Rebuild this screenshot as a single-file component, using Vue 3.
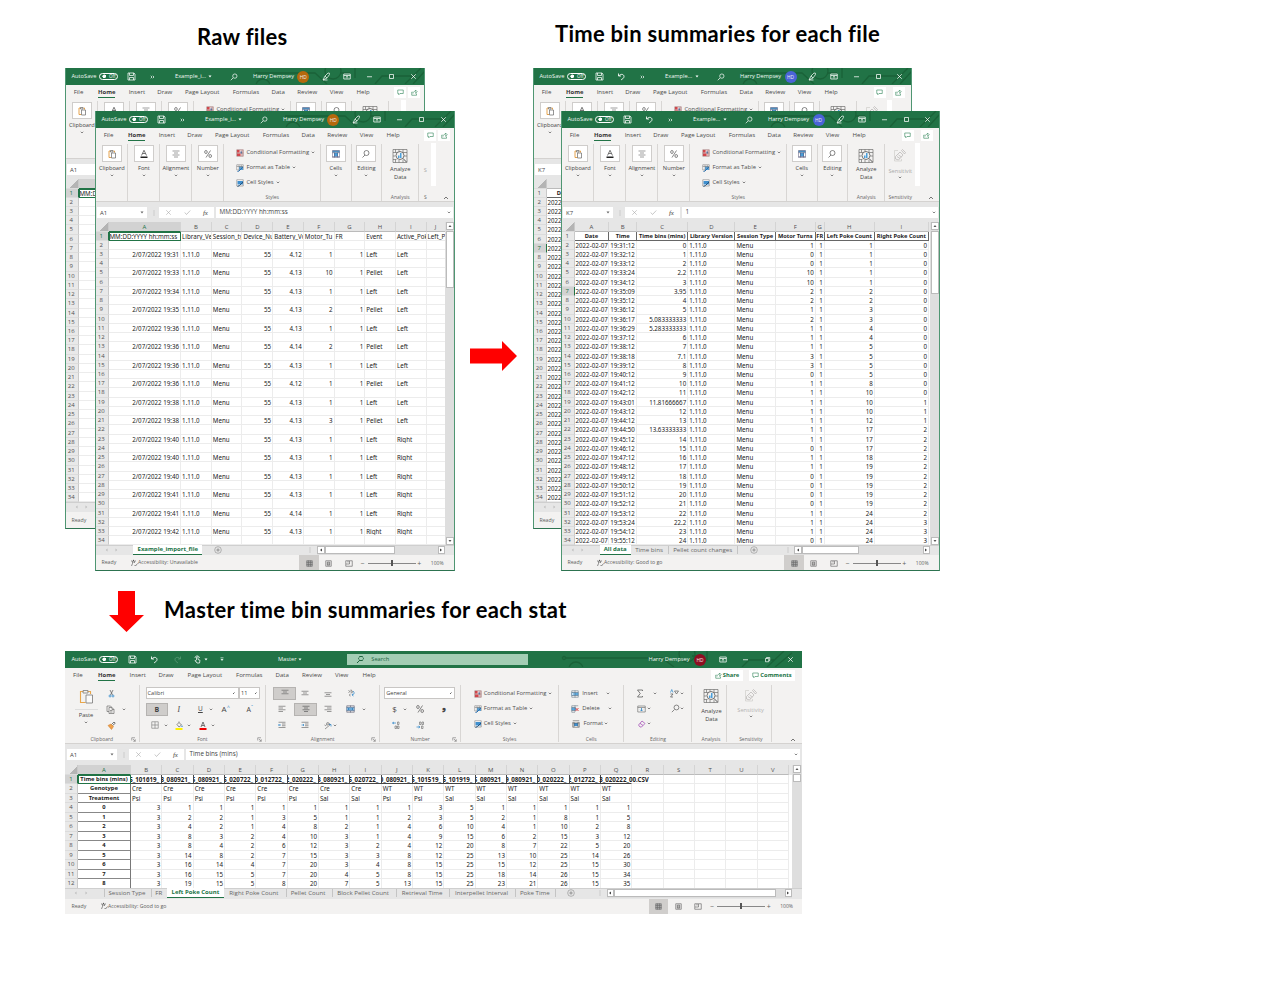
<script setup>
import { h } from 'vue'

// name: [width px, height px, viewBox, markup]
const S = (d, c = '#555', w = 1.4) => `<path d="${d}" fill="none" stroke="${c}" stroke-width="${w}"/>`
const icons = {
  chev: [4, 3, '0 0 8 6', S('M1.5 1.5L4 4L6.5 1.5', '#555', 1.4)],
  chevw: [4, 3, '0 0 8 6', '<path d="M1 1h6L4 5z" fill="#fff"/>'],
  tri: [4, 3, '0 0 8 6', '<path d="M1 1h6L4 5z" fill="#666"/>'],
  custom: [4, 5, '0 0 8 10', '<path d="M1 1h6v1.500h-6zM1 4h6L4 8z" fill="#dfeee5"/>'],
  up: [6, 4, '0 0 12 8', S('M2 6L6 2L10 6', '#555', 1.6)],
  save: [9, 9, '0 0 18 18', S('M2 2H14L16 4V16H2ZM5 2V7H13V2M5 16V11H13V16', '#fff', 1.5)],
  undo: [9, 9, '0 0 18 18', S('M3 3V8H8M3.500 8C7 3 14 4 14 9C14 13 10 14 8 16', '#fff', 1.7)],
  redo: [9, 9, '0 0 18 18', S('M15 3V8H10M14.500 8C11 3 4 4 4 9C4 13 8 14 10 16', '#5c9c78', 1.5)],
  touch: [9, 9, '0 0 18 18', S('M7 10V4.500Q8.500 2.500 10 4.500V9L14 10.500L13 16H8L4 11L7 12M4 6C4 1 12 0 13 6', '#fff', 1.5)],
  more: [5, 4, '0 0 10 8', S('M1.500 1.500L4 4L1.500 6.500M5.500 1.500L8 4L5.500 6.500', '#fff', 1.4)],
  find: [8, 8, '0 0 16 16', S('M6 10L1.500 14.500M14 6.200A4.300 4.300 0 1 1 5.400 6.200A4.300 4.300 0 1 1 14 6.200', '#fff', 1.4)],
  findd: [9, 9, '0 0 16 16', S('M6 10L1.500 14.500M14 6.200A4.300 4.300 0 1 1 5.400 6.200A4.300 4.300 0 1 1 14 6.200', '#555', 1.2)],
  pen: [9, 9, '0 0 18 18', S('M2 16L6 8L12 2Q16 1 15 5L10 12ZM6 8L10 12M2 16H11', '#fff', 1.4)],
  ribbon: [8, 7, '0 0 16 14', S('M1.500 2H14.500V12H1.500ZM1.500 5H14.500M8 11V7M6 8.500L8 6.500L10 8.500', '#fff', 1.5)],
  min: [7, 7, '0 0 14 14', S('M2 7.500H12', '#fff', 1.5)],
  max: [7, 7, '0 0 14 14', S('M3 3H11V11H3Z', '#fff', 1.5)],
  restore: [7, 7, '0 0 14 14', S('M3 5H9.500V11.500H3ZM5 5V3H11.500V9H9.500', '#fff', 1.4)],
  close: [7, 7, '0 0 14 14', S('M2.500 2.500L11.500 11.500M11.500 2.500L2.500 11.500', '#fff', 1.5)],
  comment: [7, 7, '0 0 14 14', S('M1.500 2H12.500V9H6L3.500 11.500V9H1.500Z', '#2f8557', 1.2)],
  share: [7, 7, '0 0 14 14', S('M3 6H1.500V12.500H11V9M4 9C4 6 6 4.500 9 4.500V2L12.500 5.500L9 8.500V6.500', '#2f8557', 1.2)],
  clip: [10, 10, '0 0 20 20', S('M7 4H4V17H8M13 4H15V7', '#e29a3c', 1.8) + S('M7 3H12V6H7ZM9 8H17V18H9Z', '#666', 1.4)],
  fontA: [10, 10, '0 0 20 20', S('M5 13L10 2.500L15 13M7 9H13', '#555', 1.6) + '<path d="M3 15h14v3H3z" fill="#222"/>'],
  align: [10, 10, '0 0 20 20', S('M3 4H17M6 8H14M3 12H17M6 16H14', '#777', 1.4)],
  percent: [10, 10, '0 0 20 20', S('M15 3L6 17M8.500 6A2.600 3 0 1 1 3.300 6A2.600 3 0 1 1 8.500 6M17 14A2.600 3 0 1 1 11.800 14A2.600 3 0 1 1 17 14', '#555', 1.4)],
  cells: [10, 10, '0 0 20 20', '<path d="M3 3h14v4H3z" fill="#4c8fc0"/><path d="M6 8h8v7H6z" fill="#4b9fdb"/>' + S('M3 3H17V17H3ZM3 7.500H17M3 15H17M7 7V17M13 7V17', '#557', 1)],
  lens: [10, 10, '0 0 20 20', S('M8 12L3 17M16 8A5 5 0 1 1 6 8A5 5 0 1 1 16 8', '#555', 1.4)],
  cond: [8, 8, '0 0 16 16', '<path d="M1 1h14v14H1z" fill="#f3d3d3"/><path d="M2 2h5v5H2zM2 9h7v5H2z" fill="#d8444a"/><path d="M9 5h3v4H9z" fill="#3a7fc4"/>' + S('M1.500 1.500H14.500V14.500H1.500ZM1.500 8H14.500M12 2V14', '#866', 1)],
  ftable: [8, 8, '0 0 16 16', '<path d="M1 1h14v11H1z" fill="#fff"/><path d="M6 5h8v7H6z" fill="#58a5de"/>' + S('M1.500 1.500H14.500V12M1.500 1.500V12H6M1.500 5H14M6 2V12M10.500 2V9', '#666', 1) + S('M14 6L6 14L3 15', '#2b6fae', 2)],
  cstyle: [8, 8, '0 0 16 16', '<path d="M1 1h14v11H1z" fill="#fff"/><path d="M3 4h11v7H3z" fill="#3f8fce"/>' + S('M1.500 1.500H14.500V14H1.500Z', '#666', 1) + S('M14 6L7 13L3 15', '#24527c', 2)],
  analyze: [16, 16, '0 0 32 32', S('M2 3H30V29H2ZM2 9H30M2 23H9M24 16H30M7 3V9M14 3V9M22 3V9M7 23V29M14 24V29M22 24V29M2 16H7', '#666', 1.3) + '<circle cx="16" cy="15" r="8" fill="#f3f2f1" stroke="#555" stroke-width="1.600"/><path d="M12 15h3v5h-3zM16 10h3v10h-3z" fill="#4b9fdb"/>' + S('M22 21L29 28', '#555', 2)],
  sens: [14, 15, '0 0 28 30', S('M5 17L14 8L20 14L11 24L5 22ZM17 5L19 3L25 9L23 12ZM8 17L14 21M11 14L17 18', '#b9b7b5', 1.5) + S('M10 5H3V26H17V22', '#c9c7c5', 1.2)],
  paste: [15, 15, '0 0 30 30', S('M9 5H3V27H13M17 5H23V10', '#e9a64b', 2.2) + S('M8 3H18V8H8Z', '#888', 1.8) + '<path d="M14 12h13v16H14z" fill="#fafafa" stroke="#777" stroke-width="1.600"/>'],
  cut: [9, 9, '0 0 18 18', S('M6 2L11 12M12 2L7 12', '#555', 1.4) + '<circle cx="6" cy="14" r="2" fill="none" stroke="#2e86c8" stroke-width="1.500"/><circle cx="12" cy="14" r="2" fill="none" stroke="#2e86c8" stroke-width="1.500"/>'],
  copy: [9, 9, '0 0 18 18', S('M6 13H2V2H9L11 4M6 5H12L16 9V17H6ZM12 5V9H16M8 11H13M8 14H13', '#666', 1.3)],
  brush: [9, 9, '0 0 18 18', S('M9 7L14 2L16.500 4.500L11 9', '#555', 1.6) + '<path d="M2 9l6-3 5 5-4 6z" fill="#f0a04a" stroke="#c97a2a"/>'],
  borders: [8, 8, '0 0 16 16', S('M1.500 1.500H14.500V14.500H1.500ZM8 1.500V14.500M1.500 8H14.500', '#777', 1.2)],
  fill: [8, 9, '0 0 16 18', S('M4 7L8 3L13 8L8 12ZM8 3V1', '#555', 1.3) + '<path d="M14 8l1.500 4h-3z" fill="#2e86c8"/><path d="M1 14h14v4H1z" fill="#fff200"/>'],
  fcolor: [8, 9, '0 0 16 18', S('M4 12L8 2L12 12M5.500 9H10.500', '#555', 1.6) + '<path d="M1 14h14v4H1z" fill="#f00000"/>'],
  vtop: [8, 8, '0 0 16 16', S('M1 2.500H15M4 6H12M1 9.500H15', '#666', 1.3)],
  vmid: [8, 8, '0 0 16 16', S('M1 4.500H15M4 8H12M1 11.500H15', '#666', 1.3)],
  vbot: [8, 8, '0 0 16 16', S('M1 7.500H15M4 11H12M1 14.500H15', '#666', 1.3)],
  left: [8, 8, '0 0 16 16', S('M1 2.500H15M1 6H10M1 9.500H15M1 13H10', '#666', 1.3)],
  mid: [8, 8, '0 0 16 16', S('M1 2.500H15M4 6H12M1 9.500H15M4 13H12', '#555', 1.3)],
  right: [8, 8, '0 0 16 16', S('M1 2.500H15M6 6H15M1 9.500H15M6 13H15', '#666', 1.3)],
  wrap: [8, 8, '0 0 16 16', S('M3 7A2 2 0 1 0 3 3M8 1V7A2 2 0 1 0 8 4M7 10A2 2 0 1 0 7 14', '#666', 1.3) + S('M12 4Q15 6 14 9T10 12M12 9L10 12L13 14', '#2e86c8', 1.4)],
  merge: [9, 8, '0 0 18 16', '<path d="M1 4h16v8H1z" fill="#8ec5ec"/>' + S('M1.500 1.500H16.500V14.500H1.500ZM1.500 4.500H16.500M1.500 11.500H16.500M9 1V4M9 12V15', '#556', 1.1) + S('M4 8H14M6 6L4 8L6 10M12 6L14 8L12 10', '#1d6fb0', 1.2)],
  outdent: [8, 8, '0 0 16 16', S('M1 2.500H15M8 6H15M8 9.500H15M1 13H15', '#666', 1.3) + S('M6 8H1M3 6L1 8L3 10', '#2e86c8', 1.4)],
  indent: [8, 8, '0 0 16 16', S('M1 2.500H15M8 6H15M8 9.500H15M1 13H15', '#666', 1.3) + S('M1 8H6M4 6L6 8L4 10', '#2e86c8', 1.4)],
  orient: [9, 9, '0 0 18 18', S('M3 8A2.500 2.500 0 1 0 7 5L9 9M8 2L12 8A2 2 0 1 0 10 4M4 16L15 7', '#666', 1.3) + S('M12 7H16V11', '#2e86c8', 1.5)],
  decinc: [8, 8, '0 0 16 16', S('M11 2H14V7H11ZM6 10H9V15H6ZM11 10H14V15H11Z', '#666', 1.2) + S('M8 4H1M4 2L1 4L4 6', '#2e86c8', 1.4)],
  decdec: [8, 8, '0 0 16 16', S('M7 2H10V7H7ZM12 2H15V7H12ZM11 10H14V15H11Z', '#666', 1.2) + S('M1 12H8M5 10L8 12L5 14', '#2e86c8', 1.4)],
  ins: [8, 8, '0 0 16 16', '<path d="M1 5h14v6H1z" fill="#5ba9df"/>' + S('M1.500 1.500H14.500V14.500H1.500ZM8 1V15M1.500 5H14.500M1.500 11H14.500', '#567', 1) + S('M7 8H2M4 6L2 8L4 10', '#fff', 1.2)],
  del: [8, 8, '0 0 16 16', '<path d="M1 5h9v6H1z" fill="#5ba9df"/>' + S('M1.500 1.500H14.500M1.500 1.500V14.500H8M1.500 5H9M1.500 11H8M8 1V14', '#567', 1) + S('M9 6L15 12M15 6L9 12', '#d83b3b', 1.8)],
  fmt: [8, 8, '0 0 16 16', '<path d="M4 6h8v6H4z" fill="#3f8fce"/>' + S('M1.500 1.500H14.500M1.500 4.500V14.500H14.500V4.500M1.500 6H14.500M4 4V14M12 4V14', '#555', 1.2)],
  sigma: [8, 9, '0 0 16 18', S('M13 4V2H3L8.500 9L3 16H13V14', '#555', 1.5)],
  filld: [9, 8, '0 0 18 16', S('M1.500 2H16.500V14H1.500ZM1.500 5H16.500', '#666', 1.2) + S('M9 6V12M6.500 9.500L9 12L11.500 9.500', '#2e86c8', 1.6)],
  erase: [9, 8, '0 0 18 16', S('M3 10L10 2L16 7L9 14H6ZM6 6.500L12 11', '#a24bb5', 1.5)],
  sort: [9, 9, '0 0 18 18', S('M1 7L3.500 1L6 7', '#2e86c8', 1.4) + S('M1 10H6L1 16H6', '#555', 1.4) + S('M9 4H17L13 10Z', '#555', 1.3)],
  launch: [5, 5, '0 0 10 10', S('M1.500 7V1.500H8M4 4L8.500 8.500M8.500 4.500V8.500H4.500', '#666', 1.1)],
  x: [7, 7, '0 0 14 14', S('M2.500 2.500L11.500 11.500M11.500 2.500L2.500 11.500', '#aaa', 1.2)],
  check: [7, 7, '0 0 14 14', S('M1.500 7L5 11L12.500 3', '#aaa', 1.3)],
  dots: [2, 6, '0 0 4 12', '<path d="M1 1h2v2H1zM1 5h2v2H1zM1 9h2v2H1z" fill="#b5b5b5"/>'],
  prev: [3, 4, '0 0 6 8', '<path d="M5 1v6L1.500 4z" fill="#bbb"/>'],
  next: [3, 4, '0 0 6 8', '<path d="M1 1v6L4.500 4z" fill="#bbb"/>'],
  aup: [4, 4, '0 0 8 8', '<path d="M1 6h6L4 2z" fill="#555"/>'],
  adown: [4, 4, '0 0 8 8', '<path d="M1 2h6L4 6z" fill="#555"/>'],
  aleft: [4, 4, '0 0 8 8', '<path d="M6 1v6L2 4z" fill="#444"/>'],
  aright: [4, 4, '0 0 8 8', '<path d="M2 1v6L6 4z" fill="#444"/>'],
  plus: [8, 8, '0 0 14 14', '<circle cx="7" cy="7" r="5.800" fill="none" stroke="#8a8a8a"/>' + S('M7 4V10M4 7H10', '#777', 1.2)],
  access: [8, 8, '0 0 16 16', '<circle cx="7" cy="3" r="1.500" fill="#555"/>' + S('M2 3.500L7 6L12 3.500M5 6V9L3 14M9 6V8M9 12L11 14L15 9', '#555', 1.3)],
  grid: [7, 7, '0 0 14 14', '<path d="M1 1h12v12H1z" fill="#aaa"/>' + S('M1.500 1.500H12.500V12.500H1.500ZM1 5H13M1 9H13M5 1V13M9 1V13', '#666', 1.1)],
  page: [7, 7, '0 0 14 14', S('M1.500 1.500H12.500V12.500H1.500ZM4.500 4H9.500V10.500H4.500ZM4 6H10M4 8.500H10', '#666', 1.3)],
  brk: [8, 7, '0 0 16 14', S('M1.500 1.500H14.500V12.500H1.500ZM2 8H9V2M6 2V5', '#666', 1.3)],
}
const Icon = (p) => {
  const [w, ht, vb, inner] = icons[p.name]
  return h('svg', { class: 'ic', width: w, height: ht, viewBox: vb, innerHTML: inner })
}
Icon.props = ['name']

// A row of labels and icons; each item is [start, kind, value, class] and
// stretches as far as the start of the next one.
const Strip = (p) =>
  h('div', { class: 'strip', style: { paddingLeft: p.items[0][0] + 'px' } },
    p.items.map(([x, kind, v, cls], i) => {
      const next = p.items[i + 1]
      const style = next ? { width: (next[0] - x).toFixed(2) + 'px' } : {}
      let inner = null
      if (kind === 'i') inner = h(Icon, { name: v })
      if (kind === 't') inner = h('span', { class: cls }, v)
      if (kind === 'on') inner = h('b', { class: 'onbox' }, [h(Icon, { name: v })])
      return h('div', { class: 'slot', style }, [inner])
    }))
Strip.props = ['items']

const menu = ['File', 'Home', 'Insert', 'Draw', 'Page Layout', 'Formulas', 'Data', 'Review', 'View', 'Help']
const tabItems = (xs) => menu.map((m, i) => [xs[i], 't', m, i === 1 ? 'tab home' : 'tab'])
const tabsSmall = tabItems([8.7, 33, 63.7, 92.3, 120, 167.7, 206.6, 232.3, 264.9, 291.7])
const tabsMaster = tabItems([8, 33, 64.5, 93.5, 122.5, 171, 210.5, 237, 270, 297.5])

const titleRaw = [[6.5, 't', 'AutoSave', 'tt auto'], [34, 't', 'Off', 'toggle'], [62, 'i', 'save'], [85.3, 'i', 'more'],
  [110, 't', 'Example_i...', 'tt ex'], [143, 'i', 'chevw'], [165, 'i', 'find'], [188, 't', 'Harry Dempsey', 'tt name'],
  [232.3, 't', 'HD', 'who amber'], [257, 'i', 'pen'], [278, 'i', 'ribbon'], [301, 'i', 'min'], [322.7, 'i', 'max'], [344.6, 'i', 'close']]
const titleBin = [[6.5, 't', 'AutoSave', 'tt auto'], [34, 't', 'Off', 'toggle'], [62, 'i', 'save'], [83.500, 'i', 'undo'], [107, 'i', 'more'],
  [132, 't', 'Example...', 'tt ex'], [162, 'i', 'chevw'], [184, 'i', 'find'], [207, 't', 'Harry Dempsey', 'tt name'],
  [251.5, 't', 'HD', 'who blue'], [274.7, 'i', 'pen'], [297, 'i', 'ribbon'], [320.500, 'i', 'min'], [342, 'i', 'max'], [363.500, 'i', 'close']]
const titleMaster = [[6.5, 't', 'AutoSave', 'tt auto'], [34, 't', 'Off', 'toggle'], [62.5, 'i', 'save'], [84.7, 'i', 'undo'], [108, 'i', 'redo'],
  [128.5, 'i', 'touch'], [139.5, 'i', 'chevw'], [155, 'i', 'custom'], [213, 't', 'Master', 'tt mst'], [233.500, 'i', 'chevw'],
  [282.3, 't', 'Search', 'search'], [583.5, 't', 'Harry Dempsey', 'tt name'], [629, 't', 'HD', 'who red'], [653.7, 'i', 'ribbon'],
  [677, 'i', 'min'], [699.2, 'i', 'restore'], [721.7, 'i', 'close']]

const rawTimes = '31 33 34 35 36 36 36 36 38 38 40 40 40 41 41 42'.split(' ')
const rawBatt = '12 13 13 13 13 14 13 12 13 13 13 13 13 13 14 13'.split(' ')
const rawTurn = [1, 10, 1, 2, 1, 2, 1, 1, 1, 3, 1, 1, 1, 1, 1, 1]
const rawEvent = 'Left Pellet Left Pellet Left Pellet Left Pellet Left Pellet Left Left Left Left Left Right'.split(' ')
const rawHour = (m) => '2/07/2022 19:' + m
const rawRows = [['MM:DD:YYYY hh:mm:ss', 'Library_Ve', 'Session_ty', 'Device_Nu', 'Battery_Vo', 'Motor_Tu', 'FR', 'Event', 'Active_Pok', 'Left_P']]
for (let i = 0; i < 33; i++) {
  const k = (i - 1) / 2
  rawRows.push(i % 2 ? [rawHour(rawTimes[k]), '1.11.0', 'Menu', '55', '4.' + rawBatt[k], rawTurn[k], '1', rawEvent[k], k < 10 ? 'Left' : 'Right', ''] : Array(10).fill(''))
}
const binSrc = `31:12 0 1 1 0|32:12 1 0 1 0|33:12 2 0 1 0|33:24 2.2 10 1 0|34:12 3 10 1 0|35:09 3.95 2 2 0|35:12 4 2 2 0|36:12 5 1 3 0|36:17 5.083333333 2 3 0|36:29 5.283333333 1 4 0|37:12 6 1 4 0|38:12 7 1 5 0|38:18 7.1 3 5 0|39:12 8 3 5 0|40:12 9 0 5 0|41:12 10 1 8 0|42:12 11 1 10 0|43:01 11.81666667 1 10 1|43:12 12 1 10 1|44:12 13 1 12 1|44:50 13.63333333 1 17 2|45:12 14 1 17 2|46:12 15 0 17 2|47:12 16 1 18 2|48:12 17 1 19 2|49:12 18 0 19 2|50:12 19 0 19 2|51:12 20 0 19 2|52:12 21 0 19 2|53:12 22 1 24 2|53:24 22.2 1 24 3|54:12 23 1 24 3|55:12 24 0 24 3`
const binRows = [['Date', 'Time', 'Time bins (mins)', 'Library Version', 'Session Type', 'Motor Turns', 'FR', 'Left Poke Count', 'Right Poke Count'],
  ...binSrc.split('|').map((l) => {
    const [t, b, m, lp, rp] = l.split(' ')
    return ['2022-02-07', '19:' + t, b, '1.11.0', 'Menu', m, '1', lp, rp]
  })]

const raw = {
  kind: 'raw', title: titleRaw, ref: 'A1', value: 'MM:DD:YYYY hh:mm:ss', rows: rawRows,
  cols: [72.6, 30.7, 30.7, 30.7, 30.7, 30.7, 30.7, 30.7, 30.7, 19], align: 'rllrrrrlll', hot: 1,
  sheets: [[9.500, 'i', 'prev'], [20.300, 'i', 'next'], [38.3, 't', 'Example_import_file', 'sheet on w69'], [119, 'i', 'plus'], [214.500, 'i', 'dots']],
  access: 'Accessibility: Unavailable',
}
const bin = {
  kind: 'bin', title: titleBin, ref: 'K7', value: '1', rows: binRows,
  cols: [34.7, 28, 51, 47.3, 40.3, 40, 9, 50, 54.3], align: 'llrllrrrr', hot: 7,
  sheets: [[9.500, 'i', 'prev'], [20.300, 'i', 'next'], [38.7, 't', 'All data', 'sheet on w31'], [74.2, 't', 'Time bins', 'sheet'], [107.500, 't', '', 'bar'],
    [112.2, 't', 'Pellet count changes', 'sheet'], [176.500, 't', '', 'bar'], [188.7, 'i', 'plus'], [226.500, 'i', 'dots']],
  access: 'Accessibility: Good to go',
}
// A window lying behind another one only carries what shows past its front edge.
const behind = (w) => ({ ...w, back: true, value: '', access: '', sheets: w.sheets.slice(0, 2), rows: w.rows.map((r) => r.slice(0, 1)) })
const wins = [{ ...behind(raw), id: 'rawBack' }, { ...raw, id: 'rawFront' }, { ...behind(bin), id: 'binBack' }, { ...bin, id: 'binFront' }]

const groups = [['Clipboard', 'clip'], ['Font', 'fontA'], ['Alignment', 'align'], ['Number', 'percent']]
const groups2 = [['Cells', 'cells'], ['Editing', 'lens']]
const styles = [['cond', 'Conditional Formatting'], ['ftable', 'Format as Table'], ['cstyle', 'Cell Styles']]

const letters = 'ABCDEFGHIJKLMNOPQRSTUV'.split('')
const mRows = [
  ['Time bins (mins)', ...'5_101619_ 3_080921_ 5_080921_ 5_020722_ 0_012722_ 2_020222_ 3_080921_ 5_020722_ 0_080921_ 5_101519_ 5_101919_ 5_080921_ 9_080921_ 0_020222_ 2_012722_ 3_020222_00.CSV'.split(' ')],
  ['Genotype', ...Array(8).fill('Cre'), ...Array(8).fill('WT')],
  ['Treatment', ...'Psi Psi Psi Psi Psi Psi Sal Sal Psi Psi Sal Sal Sal Sal Sal Sal'.split(' ')],
  ...`3 1 1 1 1 1 1 1 1 3 5 1 1 1 1 1|3 2 2 1 3 5 1 1 2 3 5 2 1 8 1 5|3 4 2 1 4 8 2 1 4 6 10 4 1 10 2 8|3 8 3 2 4 10 3 1 4 9 15 6 2 15 3 12|3 8 4 2 6 12 3 2 4 12 20 8 7 22 5 20|3 14 8 2 7 15 3 3 8 12 25 13 10 25 14 26|3 16 14 4 7 20 3 4 8 15 25 15 12 25 15 30|3 16 15 5 7 20 4 5 8 15 25 18 14 26 15 34|3 19 15 5 8 20 7 5 13 15 25 23 21 26 15 35`
    .split('|').map((l, i) => [String(i), ...l.split(' ')]),
].map((r) => [...r, '', '', '', '', ''])

const sheetsMaster = [[9, 'i', 'prev'], [20, 'i', 'next'], [39, 't', '', 'bar'], [43.5, 't', 'Session Type', 'sheet'], [86.3, 't', '', 'bar'], [90.3, 't', 'FR', 'sheet'],
  [101.7, 't', 'Left Poke Count', 'sheet on w57'], [164.3, 't', 'Right Poke Count', 'sheet'], [221, 't', '', 'bar'], [225.7, 't', 'Pellet Count', 'sheet'],
  [266.7, 't', '', 'bar'], [272.3, 't', 'Block Pellet Count', 'sheet'], [331, 't', '', 'bar'], [336.9, 't', 'Retrieval Time', 'sheet'], [384, 't', '', 'bar'],
  [390.2, 't', 'Interpellet Interval', 'sheet'], [450, 't', '', 'bar'], [455, 't', 'Poke Time', 'sheet'], [490, 't', '', 'bar'], [502.3, 'i', 'plus'], [534, 'i', 'dots']]

const fontRows = [
  [[6, 't', 'Calibri', 'box w93'], [99.500, 't', '11', 'box w21']],
  [[6, 't', 'B', 'onbox bold'], [38, 't', 'I', 'ital'], [58.500, 't', 'U', 'und'], [69.500, 'i', 'chev'], [82, 't', 'A', 'big'], [87.500, 't', '^', 'sup'], [107, 't', 'A', 'big sm'], [111.500, 't', 'ˇ', 'sup']],
  [[11.500, 'i', 'borders'], [24, 'i', 'chev'], [35, 'i', 'fill'], [47.500, 'i', 'chev'], [59.500, 'i', 'fcolor'], [71.800, 'i', 'chev']],
]
const alignRows = [
  [[7.3, 'on', 'vtop'], [35.3, 'i', 'vmid'], [58, 'i', 'vbot'], [81.3, 'i', 'wrap']],
  [[12.300, 'i', 'left'], [28, 'on', 'mid'], [58, 'i', 'right'], [80, 'i', 'merge'], [96, 'i', 'chev']],
  [[12.300, 'i', 'outdent'], [35.3, 'i', 'indent'], [57.3, 'i', 'orient'], [67, 'i', 'chev']],
]
const numRows = [
  [[4, 't', 'General', 'box w71']],
  [[12, 't', '$', 'big'], [22.700, 'i', 'chev'], [35, 'i', 'percent'], [61.500, 't', '❟', 'comma']],
  [[12, 'i', 'decinc'], [36, 'i', 'decdec']],
]
const cellRows = [
  [[12, 'i', 'ins'], [23.3, 't', 'Insert', 'ui'], [47.500, 'i', 'chev']],
  [[12, 'i', 'del'], [23.3, 't', 'Delete', 'ui'], [49.500, 'i', 'chev']],
  [[13, 'i', 'fmt'], [24.500, 't', 'Format', 'ui'], [44.700, 'i', 'chev']],
]
const editRows = [
  [[11.500, 'i', 'sigma'], [28.500, 'i', 'chev'], [46, 'i', 'sort'], [56, 'i', 'chev']],
  [[12.700, 'i', 'filld'], [23, 'i', 'chev'], [46.500, 'i', 'findd'], [56, 'i', 'chev']],
  [[12.700, 'i', 'erase'], [23, 'i', 'chev']],
]
</script>

<template>
  <main class="canvas">
    <h2 class="head h1">Raw files</h2>
    <h2 class="head h2">Time bin summaries for each file</h2>
    <h2 class="head h3">Master time bin summaries for each stat</h2>
    <svg class="arrow right" width="48" height="32" viewBox="0 0 48 32"><path d="M0 8.500H32V1L47 16L32 31V23.500H0Z" fill="#f00" /></svg>
    <svg class="arrow down" width="36" height="42" viewBox="0 0 36 42"><path d="M9 0H26V24H35L17.500 41L0 24H9Z" fill="#f00" /></svg>

    <section v-for="w in wins" :key="w.id" class="win" :class="[w.id, w.kind]">
      <header class="titlebar">
        <svg class="deco" width="170" height="16" viewBox="0 0 170 16">
          <g fill="none" stroke="#1a6238" stroke-width="1.300">
            <path d="M0 5H60L72 16M85 5H95M100 0V10M120 16L127 8H160M150 16L166 0M158 16L170 3" /><circle cx="78" cy="3" r="8" /><circle cx="8" cy="18" r="7" />
          </g>
        </svg>
        <Strip :items="w.title" />
      </header>
      <nav class="tabs"><Strip :items="tabsSmall" /><div class="acts"><i><Icon name="comment" /></i><i><Icon name="share" /></i></div></nav>
      <div class="ribbon">
        <div v-for="(g, gi) in groups" :key="g[0]" class="grp"><span class="tile"><Icon :name="g[1]" /></span><template v-if="!w.back || !gi"><span class="lbl">{{ g[0] }}</span><Icon name="chev" /></template></div>
        <div class="grp styles">
          <p v-for="s in w.back ? styles.slice(0, 1) : styles" :key="s[0]"><Icon :name="s[0]" /><span class="ui">{{ s[1] }}</span><Icon name="chev" /></p>
          <span v-if="!w.back" class="foot">Styles</span>
        </div>
        <div v-for="g in groups2" :key="g[0]" class="grp narrow"><span class="tile"><Icon :name="g[1]" /></span><template v-if="!w.back"><span class="lbl">{{ g[0] }}</span><Icon name="chev" /></template></div>
        <div class="grp ana"><Icon name="analyze" /><template v-if="!w.back"><span class="lbl">Analyze<br />Data</span><span class="foot">Analysis</span></template></div>
        <div class="grp sen">
          <Icon v-if="w.kind === 'bin'" name="sens" />
          <template v-if="!w.back"><span class="lbl">{{ w.kind === 'bin' ? 'Sensitivit' : 'S' }}</span><Icon v-if="w.kind === 'bin'" name="chev" /><span class="foot">{{ w.kind === 'bin' ? 'Sensitivity' : 'S' }}</span></template>
        </div>
        <div class="scrollstrip"></div>
        <Icon name="up" class="collapse" />
      </div>
      <div class="fbar">
        <div class="ref"><span>{{ w.ref }}</span><Icon name="tri" /></div><Icon name="dots" />
        <div class="fx"><Icon name="x" /><Icon name="check" /><em v-if="!w.back">fx</em></div>
        <div class="val"><span>{{ w.value }}</span><Icon name="chev" /></div>
      </div>
      <div class="sheetarea">
        <div class="cells">
          <div class="hrow"><span class="rh corner"></span><span v-for="(c, i) in w.cols" :key="i" class="ch" :class="{ hot: w.kind === 'raw' && i === 0 }" :style="{ width: c + 'px' }">{{ w.back ? '' : letters[i] }}</span></div>
          <div v-for="(r, ri) in w.rows" :key="ri" class="row" :class="{ first: ri === 0 }">
            <span class="rh" :class="{ hot: ri + 1 === w.hot }">{{ ri + 1 }}</span>
            <span v-for="(c, i) in r" :key="i" class="c" :class="[ri ? w.align[i] : 'l', { sel: w.kind === 'raw' && !ri && !i }]" :style="{ width: w.cols[i] + 'px' }">{{ w.back && w.kind === 'raw' && ri ? '' : c }}</span>
          </div>
        </div>
        <div class="vbar"><b class="ar"><Icon name="aup" /></b><b class="thumb"></b><b class="ar end"><Icon name="adown" /></b></div>
      </div>
      <div class="sheets"><Strip :items="w.sheets" /><div class="hbar"><b class="ar"><Icon name="aleft" /></b><b class="thumb"></b><b class="ar end"><Icon name="aright" /></b></div></div>
      <footer class="status">
        <span class="ready">Ready</span><template v-if="!w.back"><Icon name="access" /><span>{{ w.access }}</span>
          <div class="zoom"><i class="von"><Icon name="grid" /></i><Icon name="page" /><Icon name="brk" /><span class="pm mi">−</span><i class="track"><b></b></i><span class="pm">+</span><span class="pct">100%</span></div></template>
      </footer>
    </section>

    <section class="win master">
      <header class="titlebar">
        <svg class="deco" width="250" height="16" viewBox="0 0 250 16">
          <g fill="none" stroke="#1a6238" stroke-width="1.300">
            <path d="M14 7H110L122 16M140 5H150M155 0V10M190 16L197 9H222M215 16L232 0M223 16L240 2" /><circle cx="135" cy="3" r="8" /><circle cx="24" cy="18" r="7" /><circle cx="12" cy="7" r="1.500" />
          </g>
        </svg>
        <Strip :items="titleMaster" />
      </header>
      <nav class="tabs"><Strip :items="tabsMaster" /><div class="acts"><i><Icon name="share" />Share</i><i><Icon name="comment" />Comments</i></div></nav>
      <div class="ribbon">
        <div class="g g1">
          <div class="clipcols">
            <div class="pastecol"><Icon name="paste" /><span>Paste</span><Icon name="chev" /></div>
            <div class="cutcol"><Strip :items="[[5.5, 'i', 'cut']]" /><Strip :items="[[5, 'i', 'copy'], [20.500, 'i', 'chev']]" /><Strip :items="[[6, 'i', 'brush']]" /></div>
          </div>
          <span class="foot">Clipboard</span><Icon name="launch" class="la" />
        </div>
        <div class="g g2"><Strip v-for="(r, i) in fontRows" :key="i" :items="r" /><span class="foot">Font</span><Icon name="launch" class="la" /></div>
        <div class="g g3"><Strip v-for="(r, i) in alignRows" :key="i" :items="r" /><span class="foot">Alignment</span><Icon name="launch" class="la" /></div>
        <div class="g g4"><Strip v-for="(r, i) in numRows" :key="i" :items="r" /><span class="foot">Number</span><Icon name="launch" class="la" /></div>
        <div class="g g5 tight"><div v-for="s in styles" :key="s[0]" class="srow"><Icon :name="s[0]" /><span class="ui">{{ s[1] }}</span><Icon name="chev" /></div><span class="foot">Styles</span></div>
        <div class="g g6 tight"><Strip v-for="(r, i) in cellRows" :key="i" :items="r" /><span class="foot">Cells</span></div>
        <div class="g g7 tight"><Strip v-for="(r, i) in editRows" :key="i" :items="r" /><span class="foot">Editing</span></div>
        <div class="g g8 an"><Icon name="analyze" /><span class="lbl">Analyze<br />Data</span><span class="foot">Analysis</span></div>
        <div class="g g9 an dim"><Icon name="sens" /><span class="lbl">Sensitivity</span><Icon name="chev" /><span class="foot">Sensitivity</span></div>
        <Icon name="up" class="collapse" />
      </div>
      <div class="fbar">
        <div class="ref"><span>A1</span><Icon name="tri" /></div><Icon name="dots" />
        <div class="fx"><Icon name="x" /><Icon name="check" /><em>fx</em></div>
        <div class="val"><span>Time bins (mins)</span><Icon name="chev" /></div>
      </div>
      <div class="sheetarea">
        <div class="cells">
          <div class="hrow"><span class="rh corner"></span><span v-for="(l, i) in letters" :key="l" class="ch" :class="{ hot: i === 0, ca: i === 0 }">{{ l }}</span></div>
          <div v-for="(r, ri) in mRows" :key="ri" class="row" :class="{ first: ri === 0 }">
            <span class="rh" :class="{ hot: ri === 0 }">{{ ri + 1 }}</span>
            <span v-for="(c, i) in r" :key="i" class="c" :class="[i === 0 ? 'ca' : ri > 2 ? 'r' : 'l', { sel: !ri && !i, file: !ri && i > 0 && i < 17, last: !ri && i === 16 }]">{{ c }}</span>
          </div>
        </div>
        <div class="vbar"><b class="ar"><Icon name="aup" /></b><b class="thumb"></b></div>
      </div>
      <div class="sheets"><Strip :items="sheetsMaster" /><div class="hbar"><b class="ar"><Icon name="aleft" /></b><b class="thumb"></b><b class="ar end"><Icon name="aright" /></b></div></div>
      <footer class="status">
        <span class="ready">Ready</span><Icon name="access" /><span>Accessibility: Good to go</span>
        <div class="zoom"><i class="von"><Icon name="grid" /></i><Icon name="page" /><Icon name="brk" /><span class="pm mi">−</span><i class="track"><b></b></i><span class="pm">+</span><span class="pct">100%</span></div>
      </footer>
    </section>
  </main>
</template>

<style>
body { margin: 0; background: #fff; }
</style>

<style scoped>
.canvas { position: relative; width: 1280px; height: 983px; overflow: hidden; background: #fff; font-family: "Open Sans", "Noto Sans", sans-serif; font-size: 6px; line-height: 1; color: #444; }
.canvas :deep(*) { box-sizing: border-box; white-space: nowrap; }
.canvas :deep(i), .canvas :deep(b) { font-style: normal; }
.canvas :deep(.ic) { display: block; flex: none; }
.head { position: absolute; margin: 0; font: 700 22px/28px Lato, sans-serif; color: #000; letter-spacing: 0.280px; }
.h1 { left: 197px; top: 22.500px; }
.h2 { left: 555px; top: 19.500px; }
.h3 { left: 164px; top: 595.500px; }
.arrow { position: absolute; }
.arrow.right { left: 470px; top: 340px; }
.arrow.down { left: 109px; top: 591px; }

.win { position: absolute; display: flex; flex-direction: column; overflow: hidden; background: #f3f2f1; height: 460px; }
.win::after { content: ""; position: absolute; inset: 0; border: 1px solid #4f9672; border-top: 0; border-bottom-color: #2d7350; pointer-events: none; }
.win.raw { width: 360px; }
.win.bin { width: 379px; }
.rawBack { left: 65px; top: 68px; }
.rawFront { left: 95px; top: 111px; }
.binBack { left: 533px; top: 68px; }
.binFront { left: 561px; top: 111px; }
.win.rawBack, .win.binBack { height: 461px; }
.win.master { left: 65px; top: 651px; width: 737px; height: 263px; }
.win.master::after { display: none; }

.canvas :deep(.strip) { display: flex; align-items: center; height: 100%; }
.canvas :deep(.slot) { flex: none; display: flex; align-items: center; height: 100%; }
.canvas :deep(.slot > *) { flex: none; }

.titlebar { position: relative; flex: none; height: 17px; background: #217346; color: #fff; }
.deco { position: absolute; right: 0; top: 0; }
.titlebar :deep(.strip) { position: relative; }
.titlebar :deep(.tt) { font-size: 5.700px; color: #f2f8f4; }
.titlebar :deep(.toggle) { width: 18.500px; height: 6.500px; border: 1px solid #fff; border-radius: 4px; font-size: 4.500px; line-height: 4.500px; padding-left: 9px; background: radial-gradient(circle at 4.200px 2.300px, #fff 1.600px, transparent 2px); }
.titlebar :deep(.who) { width: 12px; height: 12px; border-radius: 50%; font-size: 4.800px; line-height: 12px; text-align: center; color: #eee; }
.titlebar :deep(.amber) { background: #b5690c; }
.titlebar :deep(.blue) { background: #4a63d8; }
.titlebar :deep(.red) { background: #8e0f22; }
.titlebar :deep(.search) { width: 181px; height: 11px; background: #a3cdb4; color: #20633f; line-height: 11px; padding-left: 24px; font-size: 5.700px; background-image: radial-gradient(circle at 14px 4.500px, transparent 1.700px, #20633f 2px, #20633f 2.400px, transparent 2.800px), linear-gradient(135deg, transparent 48%, #20633f 48%, #20633f 52%, transparent 52%); background-size: 100% 100%, 3px 3px; background-repeat: no-repeat; background-position: 0 0, 9.500px 6px; }

.tabs { position: relative; flex: none; height: 15px; display: flex; justify-content: space-between; }
.tabs :deep(.tab) { font-size: 6.100px; color: #4a4a4a; line-height: 10px; border-bottom: 1.300px solid transparent; margin-top: -0.500px; }
.tabs :deep(.home) { font-weight: 700; font-size: 5.900px; border-bottom-color: #217346; color: #333; }
.acts { display: flex; gap: 3px; align-items: center; }
.acts i { display: flex; align-items: center; justify-content: center; height: 11px; width: 12.500px; background: #fff; color: #217346; font-weight: 700; }
.raw .acts { margin-right: 4.700px; gap: 1.500px; }
.bin .acts { margin-right: 7px; gap: 6.500px; }
.master .acts { margin-right: 7px; gap: 6px; }
.master .acts i { width: 32px; gap: 1px; font-size: 5.800px; }
.master .acts i + i { width: 46px; }

.ribbon { position: relative; flex: none; height: 59px; display: flex; border-bottom: 1px solid #d4d2d0; padding-left: 1.400px; }
.grp { position: relative; flex: none; width: 32px; height: 57px; margin-top: 1px; border-right: 1px solid #d8d6d4; display: flex; flex-direction: column; align-items: center; padding-top: 1px; }
.grp .tile { width: 20px; height: 17px; background: #fff; border: 1px solid #cfcdcb; display: flex; align-items: center; justify-content: center; }
.grp .lbl { margin: 3px 0 2.500px; line-height: 6px; text-align: center; font-size: 5.700px; }
.grp.styles { width: 96.500px; align-items: flex-start; padding: 4.700px 0 0 12px; }
.grp.styles p { margin: 0 0 6.800px; height: 8.200px; display: flex; align-items: center; gap: 2px; }
.ui, .canvas :deep(.ui) { font-size: 5.850px; color: #505050; }
.foot { position: absolute; left: 0; right: 0; bottom: 0; text-align: center; font-size: 5px; line-height: 7px; color: #666; }
.grp.narrow { width: 30.700px; }
.grp.ana { width: 37px; padding-top: 4px; }
.grp.ana .lbl { line-height: 7.500px; margin-top: 2px; }
.grp.sen { color: #aaa; width: 30px; overflow: hidden; border: 0; padding-top: 3.500px; }
.raw .grp.sen { width: 12px; padding-top: 20px; }
.bin .grp.sen .lbl { margin-top: 5px; }
.scrollstrip { width: 4.500px; height: 43px; background: #fff; }
.collapse { position: absolute; right: 6px; bottom: 1.500px; }

.fbar { flex: none; height: 20px; background: #e6e6e6; display: flex; align-items: center; padding: 1px 2px 0; }
.fbar > div { height: 11.500px; background: #fff; display: flex; align-items: center; }
.ref { width: 49.500px; padding: 0 3px; justify-content: space-between; margin-right: 6px; font-size: 6px; }
.fx { margin-left: 4.500px; width: 55px; justify-content: space-around; }
.fx em { font: italic 7px "Liberation Serif", serif; color: #444; }
.val { margin-left: 1.500px; flex: 1; justify-content: space-between; padding: 0 2px 0 4px; font-size: 6.300px; }

.sheetarea { flex: none; height: 322.500px; display: flex; overflow: hidden; background: #fff; }
.cells { flex: 1; overflow: hidden; }
.hrow { display: flex; height: 9.500px; background: #e6e6e6; }
.ch { flex: none; text-align: center; font-size: 6px; line-height: 10px; border-right: 1px solid #d4d4d4; color: #505050; border-bottom: 0.500px solid #bbb; }
.ch.hot { background: #d2d2d2; color: #217346; border-bottom: 1px solid #217346; }
.row { display: flex; height: 9.240px; }
.rh { flex: none; width: 13.500px; background: #e9e9e9; text-align: center; font-size: 6px; line-height: 9.500px; border-bottom: 1px solid #dcdcdc; border-right: 1px solid #c9c9c9; color: #505050; }
.master .rh { width: 13px; }
.rh.hot { background: #d2d2d2; color: #217346; border-right-color: #217346; }
.corner { background: linear-gradient(135deg, transparent 62%, #b4b4b4 62%); }
.c { flex: none; padding: 0 1px; overflow: hidden; font: 6.200px/9.600px "Noto Sans", sans-serif; color: #222; border-right: 1px solid #ececec; border-bottom: 1px solid #ececec; }
.c.r { text-align: right; }
.c.sel { outline: 1px solid #217346; outline-offset: -1px; }
.bin .first .c { font-weight: 700; font-size: 5.700px; text-align: center; padding: 0; border-color: #666; color: #222; }
.vbar { flex: none; width: 10px; background: #dedede; display: flex; flex-direction: column; align-items: center; }
.vbar b { display: flex; align-items: center; justify-content: center; width: 8px; background: #fff; border: 1px solid #bbb; height: 8px; }
.vbar .thumb { height: 57px; margin-top: 1px; }
.bin .vbar .thumb { height: 63px; }
.vbar .end { margin-top: auto; }
.master .vbar .thumb { height: 8px; }

.sheets { flex: none; height: 10.500px; background: #e6e6e6; display: flex; justify-content: space-between; border-top: 1px solid #cfcfcf; }
.sheets :deep(.strip) { height: 8.500px; }
.sheets :deep(.sheet) { font-size: 6.150px; color: #666; }
.sheets :deep(.on) { background: #fff; color: #217346; font-weight: 700; height: 9.500px; line-height: 8.500px; text-align: center; border-bottom: 1px solid #217346; font-size: 6px; }
.sheets :deep(.w69) { width: 69px; }
.sheets :deep(.w31) { width: 31px; }
.sheets :deep(.w57) { width: 57.500px; }
.sheets :deep(.bar) { width: 1px; height: 8px; background: #c4c4c4; }
.hbar { display: flex; align-items: center; margin-right: 10px; background: #dedede; width: 128px; height: 9px; }
.bin .hbar { width: 136px; }
.master .hbar { width: 185.500px; }
.hbar b { display: flex; align-items: center; justify-content: center; height: 8px; width: 7.500px; border: 1px solid #bbb; background: #fff; }
.hbar .thumb { width: 70px; }
.bin .hbar .thumb { width: 57px; }
.master .hbar .thumb { width: 162px; }
.hbar .end { margin-left: auto; }

.status { flex: 1; display: flex; align-items: center; background: #f3f2f1; font-size: 5.200px; color: #606060; }
.ready { margin-left: 6.500px; width: 28.500px; }
.zoom { margin-left: auto; display: flex; align-items: center; height: 100%; width: 155.700px; }
.master .zoom { width: 153.300px; }
.zoom .von { width: 19.500px; height: 100%; background: #d0cecc; display: flex; align-items: center; justify-content: center; margin-right: 6.500px; }
.zoom .ic + .ic { margin-left: 12.500px; margin-right: 7.500px; }
.pm { font-size: 7px; width: 5px; text-align: center; flex: none; }
.mi { margin-right: 2.500px; }
.track { flex: none; width: 48px; height: 1px; background: #888; display: flex; justify-content: center; margin-right: 1px; }
.track b { width: 2px; height: 6px; margin-top: -2.500px; background: #555; }
.pct { margin-left: 9px; font-size: 5px; }

.master .ribbon { height: 61px; padding: 0; }
.g { position: relative; flex: none; height: 57px; margin-top: 2px; border-right: 1px solid #d8d6d4; }
.g > :deep(.strip) { height: 16px; }
.g.tight > :deep(.strip), .srow { height: 15px; }
.g.tight { padding-top: 1px; }
.g1 { width: 74.500px; }
.g2 { width: 126.700px; }
.g3 { width: 114px; }
.g4 { width: 81px; }
.g5 { width: 97.700px; padding-left: 12.500px; }
.g6 { width: 65.600px; }
.g7 { width: 68px; }
.g8 { width: 35px; }
.g9 { width: 44.700px; }
.srow { display: flex; align-items: center; gap: 2px; }
.g .foot { bottom: -1px; }
.la { position: absolute; right: 3px; bottom: 0; }
.clipcols { display: flex; }
.pastecol { width: 28px; margin-left: 7px; margin-right: 1px; display: flex; flex-direction: column; align-items: center; padding-top: 4px; font-size: 5.700px; }
.pastecol span { margin: 5px 0 2px; border-top: 1px solid #ddd; padding-top: 3px; width: 23px; text-align: center; }
.cutcol :deep(.strip) { height: 16px; }
.an { display: flex; flex-direction: column; align-items: center; padding-top: 3px; }
.an.g8 { padding-left: 4px; }
.an.g9 { padding-left: 2.500px; }
.an .foot { padding-left: 3px; }
.an .lbl { line-height: 7.500px; text-align: center; margin-top: 4px; font-size: 5.700px; }
.dim .lbl { color: #b5b3b1; }
.g :deep(.box) { height: 12px; background: #fff; border: 1px solid #c8c6c4; line-height: 10px; padding-left: 1px; font-size: 5.600px; background-image: linear-gradient(45deg, transparent 38%, #666 38%, #666 50%, transparent 50%), linear-gradient(-45deg, transparent 38%, #666 38%, #666 50%, transparent 50%); background-size: 1.500px 2px; background-repeat: no-repeat; background-position: right 4.500px center, right 3px center; }
.g :deep(.w93) { width: 93px; }
.g :deep(.w21) { width: 21px; }
.g :deep(.w71) { width: 71px; }
.g :deep(.onbox) { width: 22.700px; height: 13px; background: #cfcdcb; border: 1px solid #b5b3b1; display: flex; align-items: center; justify-content: center; }
.g :deep(.bold) { font-weight: 700; font-size: 7px; }
.g :deep(.ital) { font: italic 7.500px "Liberation Serif", serif; }
.g :deep(.und) { text-decoration: underline; font-size: 6.500px; }
.g :deep(.big) { font-size: 8px; }
.g :deep(.sm) { font-size: 7px; }
.g :deep(.sup) { font-size: 5px; color: #2e86c8; margin-top: -4px; }
.g :deep(.comma) { font-size: 10px; font-weight: 700; margin-top: -6px; }

.master .fbar { height: 21px; padding-top: 0; }
.master .sheetarea { height: 122.800px; }
.master .hrow { height: 10px; }
.master .row { height: 9.470px; }
.master .ch, .master .c { width: 31.330px; }
.master .ch.ca, .master .c.ca { width: 53px; }
.master .c.ca { text-align: center; font-weight: 700; border-right: 1px solid #777; border-bottom: 1px solid #888; font-size: 5.800px; color: #222; }
.master .c.file { font-weight: 700; font-size: 6.200px; text-indent: -2.800px; border-right-color: #444; border-bottom-color: #444; color: #222; }
.master .c.last { overflow: visible; border-right-color: transparent; }
.master .sheets { height: 11px; }
</style>
